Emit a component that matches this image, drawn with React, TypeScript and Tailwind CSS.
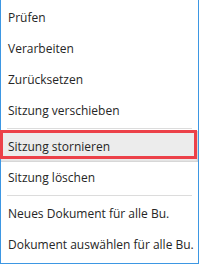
import React from 'react';

const Item: React.FC<{ label: string; active?: boolean }> = ({ label, active }) => (
  <div
    className={
      'h-[31px] flex items-center pl-[7px] text-[12px] text-[#262626] whitespace-nowrap ' +
      (active ? 'bg-[#ececec] shadow-[inset_-1px_-1px_2px_rgba(0,0,0,0.12)]' : '')
    }
  >
    {label}
  </div>
);

const Sep: React.FC = () => <div className="h-px bg-[#dcdcdc] my-[2px] mx-[6px]" />;

const App: React.FC = () => {
  return (
    <div
      className="relative w-[199px] h-[264px] bg-white border-x border-b border-[#3d97e3] pt-[2px]"
      style={{ fontFamily: '"Open Sans", "Noto Sans", sans-serif' }}
    >
      <Item label="Prüfen" />
      <Item label="Verarbeiten" />
      <Item label="Zurücksetzen" />
      <Item label="Sitzung verschieben" />
      <Sep />
      <Item label="Sitzung stornieren" active />
      <Item label="Sitzung löschen" />
      <Sep />
      <Item label="Neues Dokument für alle Bu." />
      <Item label="Dokument auswählen für alle Bu." />

      {/* Markierung */}
      <div className="absolute left-[-1px] top-[130px] w-[197px] h-[29px] border-[3px] border-[#ec4149] pointer-events-none" />
    </div>
  );
};

export default App;
